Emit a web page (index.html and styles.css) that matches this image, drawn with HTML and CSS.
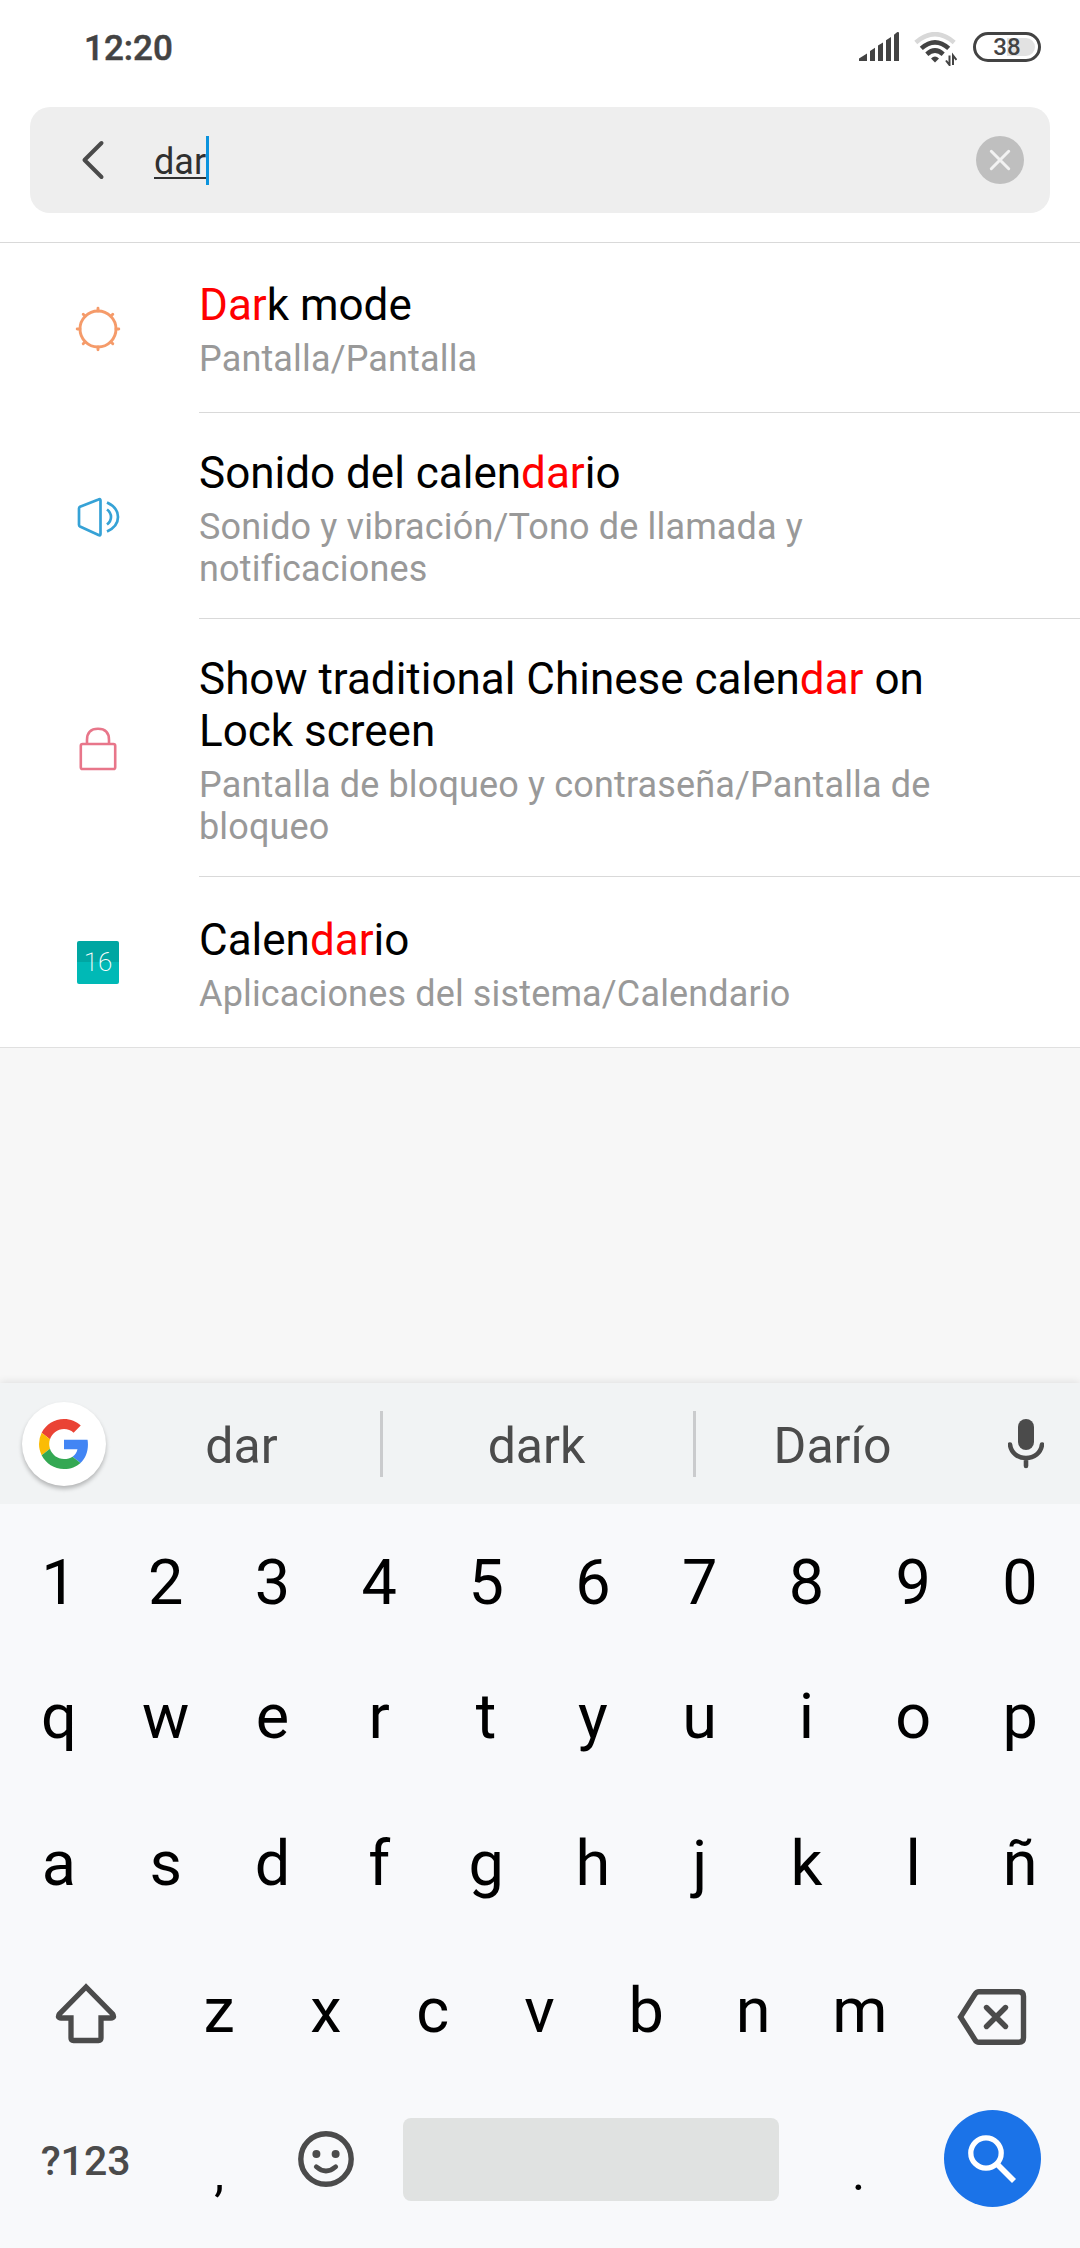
FILE: index.html
```html
<!DOCTYPE html>
<html lang="es">
<head>
<meta charset="utf-8">
<title>Ajustes</title>
<link rel="stylesheet" href="styles.css">
</head>
<body>
<div class="screen">
  <header class="status">
    <span class="clock">12:20</span>
    <div class="status-icons">
      <svg class="signal" width="40" height="29" viewBox="0 0 40 29" fill="#434343"><path d="M0 29v-2.500l8-5V29zM11 29V19l5-3.200V29zM19 29V13.600l5-3.200V29zM27 29V8.200l5-3.200V29zM35 29V2.800L38 .3q2-1 2 1V29z"/></svg>
      <svg class="wifi" width="43" height="34" viewBox="0 0 43 34" fill="none" stroke-width="4.600"><path d="M1.800 10.400Q21-6 40.200 10.400" stroke="#d8d8d8"/><path d="M7.300 16.400Q21 4.200 34.700 16.400M12.800 22.200Q21 14.800 29.200 22.200" stroke="#434343"/><path d="M17 26.500q4-4 8 0l-4 4z" fill="#434343"/><path d="M35.500 23.500V33l-3.500-4.500M39 33v-9.500l3.500 4.500" stroke="#434343" stroke-width="2"/></svg>
      <div class="battery"><span>38</span></div>
    </div>
  </header>

  <div class="search-wrap">
    <div class="search">
      <svg class="back" width="24" height="42" viewBox="0 0 24 42" fill="none" stroke="#4a4a4a" stroke-width="4" stroke-linecap="round" stroke-linejoin="round"><path d="M20.500 4L3.500 21l17 17"/></svg>
      <span class="query">dar</span><span class="caret"></span>
      <svg class="clear" width="48" height="48" viewBox="0 0 48 48"><circle cx="24" cy="24" r="24" fill="#bfbfbf"/><path d="M15.300 15.300l17.400 17.400M32.700 15.300L15.300 32.700" stroke="#f2f2f2" stroke-width="3" stroke-linecap="round"/></svg>
    </div>
  </div>

  <main class="results">
    <div class="row row-first">
      <svg class="icon" width="46" height="46" viewBox="0 0 46 46" fill="none" stroke="#f59b6a" stroke-width="2.900" stroke-linecap="round"><circle cx="23" cy="23" r="18"/><path d="M23 5V2.200M23 41v2.800M5 23H2.200M41 23h2.800M10.300 10.300L8.200 8.200M35.700 10.300l2.100-2.100M10.300 35.700l-2.100 2.100M35.700 35.700l2.100 2.100"/></svg>
      <div class="text"><div class="title"><em>Dar</em>k mode</div><div class="path">Pantalla/Pantalla</div></div>
    </div>
    <div class="row">
      <svg class="icon" width="46" height="46" viewBox="0 0 46 46" fill="none" stroke="#36a2d6" stroke-width="2.700" stroke-linejoin="round"><path d="M4 14.500q0-1.200 1-1.700L23.500 5.500q2-1 2 1V40q0 2-2 1L5 32.500q-1-.5-1-1.700z"/><path d="M32 8.500q11 5 11 14.500T32 37.500M32 15.500q4 3 4 7.500t-4 7.500"/></svg>
      <div class="text"><div class="title">Sonido del calen<em>dar</em>io</div><div class="path">Sonido y vibración/Tono de llamada y<br>notificaciones</div></div>
    </div>
    <div class="row">
      <svg class="icon" width="46" height="46" viewBox="0 0 46 46" fill="none" stroke="#e8768a" stroke-width="2.600"><rect x="5.800" y="18" width="34.400" height="25" rx="1.800"/><path d="M12 18v-4q0-11.200 11-11.200T34 14v4"/></svg>
      <div class="text"><div class="title">Show traditional Chinese calen<em>dar</em> on<br>Lock screen</div><div class="path">Pantalla de bloqueo y contraseña/Pantalla de<br>bloqueo</div></div>
    </div>
    <div class="row row-last">
      <div class="icon calendar">16</div>
      <div class="text"><div class="title">Calen<em>dar</em>io</div><div class="path">Aplicaciones del sistema/Calendario</div></div>
    </div>
  </main>

  <section class="keyboard">
    <div class="suggest">
      <div class="google"><svg width="50" height="50" viewBox="0 0 48 48"><path fill="#ea4335" d="M24 9.500c3.540 0 6.710 1.220 9.210 3.600l6.850-6.850C35.900 2.380 30.470 0 24 0 14.620 0 6.510 5.380 2.560 13.220l7.980 6.190C12.430 13.720 17.740 9.500 24 9.500z"/><path fill="#4285f4" d="M46.980 24.550c0-1.570-.15-3.090-.38-4.550H24v9.020h12.940c-.58 2.960-2.260 5.480-4.780 7.180l7.730 6c4.510-4.180 7.090-10.360 7.090-17.650z"/><path fill="#fbbc05" d="M10.530 28.590A14.500 14.500 0 0 1 9.770 24c0-1.600.27-3.140.76-4.590l-7.980-6.190A23.900 23.900 0 0 0 0 24c0 3.880.92 7.540 2.560 10.780z"/><path fill="#34a853" d="M24 48c6.480 0 11.930-2.130 15.890-5.810l-7.730-6c-2.150 1.450-4.920 2.300-8.160 2.300-6.260 0-11.570-4.220-13.470-9.910l-7.980 6.190C6.510 42.620 14.620 48 24 48z"/></svg></div>
      <div class="word word-1">dar</div><i></i><div class="word">dark</div><i></i><div class="word word-3">Darío</div>
      <svg class="mic" width="36" height="50" viewBox="0 0 36 50"><rect x="10" y="0" width="16" height="31" rx="8" fill="#4b4b4b"/><path d="M2 25.500C3 34 10 39 18 39s15-5 16-13.500M18 39v8" fill="none" stroke="#4b4b4b" stroke-width="4.600" stroke-linecap="round"/></svg>
    </div>
    <div class="keys keys-num"><b>1</b><b>2</b><b>3</b><b>4</b><b>5</b><b>6</b><b>7</b><b>8</b><b>9</b><b>0</b></div>
    <div class="keys"><b>q</b><b>w</b><b>e</b><b>r</b><b>t</b><b>y</b><b>u</b><b>i</b><b>o</b><b>p</b></div>
    <div class="keys"><b>a</b><b>s</b><b>d</b><b>f</b><b>g</b><b>h</b><b>j</b><b>k</b><b>l</b><b>ñ</b></div>
    <div class="keys">
      <span class="wide"><svg class="shift" width="62" height="62" viewBox="0 0 62 62" fill="none" stroke="#4b4b4b" stroke-width="5.300"><path d="M31 5L4.500 31.800Q1.800 36 6 36H16v20q0 2.500 2.500 2.500h25q2.500 0 2.500-2.500V36h10q4.200 0 1.500-4.200z"/></svg></span>
      <b>z</b><b>x</b><b>c</b><b>v</b><b>b</b><b>n</b><b>m</b>
      <span class="wide"><svg class="bksp" width="70" height="56" viewBox="0 0 70 56" fill="none" stroke="#4b4b4b" stroke-width="5.400"><path d="M3.500 28L18 5.200q1.500-2.500 4-2.500h40q4.500 0 4.500 4.500v41.600q0 4.500-4.500 4.500H22q-2.500 0-4-2.500z"/><path d="M29.500 18.500l19 19M48.500 18.500l-19 19" stroke-linecap="round"/></svg></span>
    </div>
    <div class="keys keys-bottom">
      <span class="wide sym">?123</span>
      <b class="punct">,</b>
      <span class="key-smile"><svg width="56" height="56" viewBox="0 0 56 56" fill="#4b4b4b"><circle cx="28" cy="28" r="25.200" fill="none" stroke="#4b4b4b" stroke-width="5.400"/><circle cx="18.400" cy="23" r="4"/><circle cx="37.600" cy="23" r="4"/><path d="M18.300 35.800q9.700 8.400 19.400 0" fill="none" stroke="#4b4b4b" stroke-width="4.800" stroke-linecap="round"/></svg></span>
      <span class="space"></span>
      <b class="punct dot">.</b>
      <span class="wide"><span class="go"><svg width="48" height="48" viewBox="0 0 48 48" fill="none" stroke="#fff"><circle cx="18" cy="18" r="15.200" stroke-width="5.300"/><path d="M29.500 29.500L46 46" stroke-width="5.600"/></svg></span></span>
    </div>
  </section>
</div>
</body>
</html>
```
FILE: styles.css
```css
* { box-sizing: border-box; }
body { margin: 0; background: #f7f7f7; font-family: Roboto, "Noto Sans", sans-serif; }
svg { display: block; flex: none; }
.screen { width: 1080px; height: 2248px; display: flex; flex-direction: column; overflow: hidden; }

.status { height: 107px; padding: 0 39px 11px 84px; background: #fff; display: flex; justify-content: space-between; align-items: center; }
.clock { font-size: 35px; font-weight: 500; color: #434343; -webkit-text-stroke: .5px #434343; }
.status-icons { display: flex; align-items: flex-start; height: 32px; }
.wifi { margin-left: 15px; }
.battery { width: 68px; height: 30px; margin-left: 16px; border: 3px solid #434343; border-radius: 15px; display: flex; align-items: center; justify-content: center; background: linear-gradient(90deg, #fff 50%, #e2e2e2 50%); box-shadow: inset 0 0 0 3px #fff; color: #434343; font-size: 24px; font-weight: 500; line-height: 24px; }

.search-wrap { height: 136px; padding: 0 30px; background: #fff; border-bottom: 1px solid #d9d9d9; }
.search { height: 106px; border-radius: 20px; background: #eee; display: flex; align-items: center; padding: 0 26px 0 51px; }
.query { margin-left: 49px; font-size: 36px; line-height: 42px; color: #303030; text-decoration: underline; text-decoration-thickness: 2px; text-underline-offset: 3px; padding-top: 3px; }
.caret { width: 3px; height: 49px; background: #0b93dd; }
.clear { margin-left: auto; }

.results { background: #fff; border-bottom: 1px solid #e0e0e0; }
.row { display: flex; align-items: center; padding-left: 75px; }
.icon { flex: none; width: 46px; height: 46px; margin-top: 2px; }
.text { flex: 1; margin-left: 78px; padding: 34px 0 28px 0; border-bottom: 1px solid #d9d9d9; color: #000; }
.row-first .text { padding: 36px 0 32px; }
.row-last .text { padding: 37px 0 32px; border: 0; }
.title { font-size: 44px; line-height: 52px; }
.title em { font-style: normal; color: #f00; }
.path { margin-top: 7px; font-size: 36px; line-height: 42px; letter-spacing: .15px; color: #999; }
.calendar { width: 42px; height: 43px; margin: 1px 2px 0; border-radius: 2px; background: linear-gradient(#00a6a2 49%, #00b9b6 49%); color: #fff; font: 200 26px/43px Roboto, sans-serif; text-align: center; }

.keyboard { margin-top: auto; height: 865px; background: #f8f9fb; box-shadow: 0 -1px 8px rgba(0,0,0,.1); }
.suggest { height: 121px; background: #f1f3f4; display: flex; align-items: center; padding: 0 36px 0 22px; }
.google { width: 84px; height: 84px; border-radius: 50%; background: #fff; box-shadow: 0 3px 4px rgba(0,0,0,.25); display: flex; align-items: center; justify-content: center; }
.suggest i { width: 3px; height: 66px; background: #cacbcd; }
.word { width: 310px; text-align: center; font-size: 50px; line-height: 58px; color: #4b4b4b; padding: 4px 3px 0 0; }
.word-1 { width: 274px; }
.word-3 { width: 276px; }
.mic { margin-left: auto; }
.keys { height: 147px; padding: 0 6.500px 0 5.500px; display: flex; align-items: center; }
.keys-num { height: 139px; padding-top: 18px; }
.keys b { width: 106.800px; text-align: center; font-weight: 400; font-size: 63px; line-height: 74px; }
.wide { width: 160.200px; display: flex; justify-content: center; }
.shift { margin-top: 4px; }
.bksp { margin: 12px 2px 0 0; }
.sym { font-size: 41px; font-weight: 500; color: #4b4b4b; padding-top: 5px; }
.key-smile { width: 106.800px; display: flex; justify-content: center; }
.keys-bottom { height: 149px; }
.space { width: 376px; height: 83px; margin: 2px 0 0 24px; background: #e0e2e1; border-radius: 8px; }
.keys .punct { font-size: 50px; padding-top: 28px; }
.keys .dot { margin-left: 26px; }
.go { width: 97px; height: 97px; border-radius: 50%; background: #1b73e8; display: flex; align-items: center; justify-content: center; }
```
